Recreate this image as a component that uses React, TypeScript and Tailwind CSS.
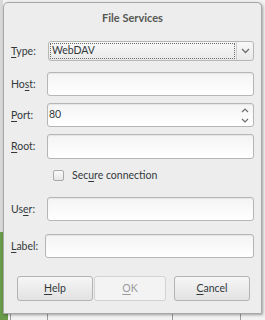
import React from "react";

const font = { fontFamily: 'Lato, "Noto Sans", sans-serif' };

function U({ c }: { c: string }) {
  return <span className="underline underline-offset-[2px] decoration-[1px]">{c}</span>;
}

function Entry({ className = "", children }: { className?: string; children?: React.ReactNode }) {
  return (
    <div
      className={`h-[24px] rounded-[3px] border border-[#b6b6b3] bg-gradient-to-b from-[#f4f4f4] to-[#ffffff] shadow-[inset_0_1px_1px_rgba(0,0,0,0.06)] flex items-center ${className}`}
    >
      {children}
    </div>
  );
}

function Row({ label, mt, entryMl = "ml-0", children }: { label: React.ReactNode; mt: string; entryMl?: string; children?: React.ReactNode }) {
  return (
    <div className={`flex items-center ${mt}`}>
      <div className="w-[36px] text-[10.5px] text-[#33393b] leading-none">{label}</div>
      <div className={`flex-1 ${entryMl}`}>{children}</div>
    </div>
  );
}

export default function App() {
  return (
    <div className="relative w-[265px] h-[320px] overflow-hidden bg-[#f2f2f2]" style={font}>
      {/* desktop background behind the dialog */}
      <div className="absolute left-0 top-0 w-[3px] h-[320px] bg-[#d9d9d9]" />
      <div className="absolute left-0 top-[232px] w-[8px] h-[88px] bg-[#6a9b4a]" />
      <div className="absolute left-[10px] top-[314px] w-[1px] h-[6px] bg-[#9a9a9a]" />
      <div className="absolute left-[47px] top-[314px] w-[1px] h-[6px] bg-[#9a9a9a]" />
      <div className="absolute left-[172px] top-[314px] w-[1px] h-[6px] bg-[#9a9a9a]" />
      <div className="absolute left-[240px] top-[314px] w-[1px] h-[6px] bg-[#9a9a9a]" />

      {/* dialog window */}
      <div className="absolute left-[3px] top-[2px] w-[259px] h-[312px] rounded-t-[5px] border border-[#a8a8a8] bg-[#ededed] shadow-[1px_1px_3px_rgba(0,0,0,0.35)] flex flex-col px-[7px]">
        <div className="pt-[8px] h-[21px] text-center text-[11px] font-bold leading-[14px] text-[#555753]">
          File Services
        </div>

        {/* Type */}
        <Row label={<><U c="T" />ype:</>} mt="mt-[17px]" entryMl="ml-[1px]">
          <div className="h-[20px] rounded-[3px] border border-[#b6b6b3] bg-gradient-to-b from-[#f8f8f8] to-[#e9e9e9] flex items-stretch">
            <div className="flex-1 m-[1px] border border-dotted border-[#6a6a6a] flex items-center pl-[1px] text-[10.5px] text-[#33393b]">
              WebDAV
            </div>
            <div className="w-[17px] border-l border-[#cfcfcf] flex items-center justify-center">
              <svg width="9" height="6" viewBox="0 0 9 6">
                <path d="M1 1 L4.5 4.5 L8 1" fill="none" stroke="#6d6d6d" strokeWidth="1.3" />
              </svg>
            </div>
          </div>
        </Row>

        {/* Host */}
        <Row label={<>Ho<U c="s" />t:</>} mt="mt-[11px]">
          <Entry />
        </Row>

        {/* Port */}
        <Row label={<><U c="P" />ort:</>} mt="mt-[7px]">
          <Entry>
            <div className="flex-1 pl-[1px] text-[10.5px] text-[#33393b]">80</div>
            <div className="w-[14px] h-full flex flex-col items-center justify-center gap-[5px] pr-[2px]">
              <svg width="8" height="5" viewBox="0 0 8 5">
                <path d="M1 4 L4 1 L7 4" fill="none" stroke="#6d6d6d" strokeWidth="1.2" />
              </svg>
              <svg width="8" height="5" viewBox="0 0 8 5">
                <path d="M1 1 L4 4 L7 1" fill="none" stroke="#6d6d6d" strokeWidth="1.2" />
              </svg>
            </div>
          </Entry>
        </Row>

        {/* Root */}
        <Row label={<><U c="R" />oot:</>} mt="mt-[7px]">
          <Entry className="h-[25px]" />
        </Row>

        {/* Secure */}
        <div className="flex items-center mt-[10px] ml-[42px] h-[12px]">
          <div className="w-[11px] h-[11px] rounded-[2px] border border-[#a9a9a9] bg-gradient-to-b from-[#fafafa] to-[#e6e6e6]" />
          <div className="ml-[8px] text-[10.5px] text-[#33393b] leading-none">
            Sec<U c="u" />re connection
          </div>
        </div>

        {/* User */}
        <Row label={<>Us<U c="e" />r:</>} mt="mt-[16px]">
          <Entry />
        </Row>

        {/* Label */}
        <Row label={<><U c="L" />abel:</>} mt="mt-[13px]" entryMl="-ml-[2px]">
          <Entry />
        </Row>

        {/* Buttons */}
        <div className="flex mt-[18px] ml-[6px]">
          <div className="w-[76px] h-[25px] rounded-[3px] border border-[#b3b3b3] bg-gradient-to-b from-[#f6f6f6] to-[#e2e2e2] flex items-center justify-center text-[10.5px] text-[#33393b]">
            <U c="H" />elp
          </div>
          <div className="ml-[1px] w-[72px] h-[25px] rounded-[3px] border border-[#d2d2d2] bg-[#f3f3f3] flex items-center justify-center text-[10.5px] text-[#9a9a9a]">
            <U c="O" />K
          </div>
          <div className="ml-[8px] w-[76px] h-[25px] rounded-[3px] border border-[#b3b3b3] bg-gradient-to-b from-[#f6f6f6] to-[#e2e2e2] flex items-center justify-center text-[10.5px] text-[#33393b]">
            <U c="C" />ancel
          </div>
        </div>
      </div>
    </div>
  );
}
